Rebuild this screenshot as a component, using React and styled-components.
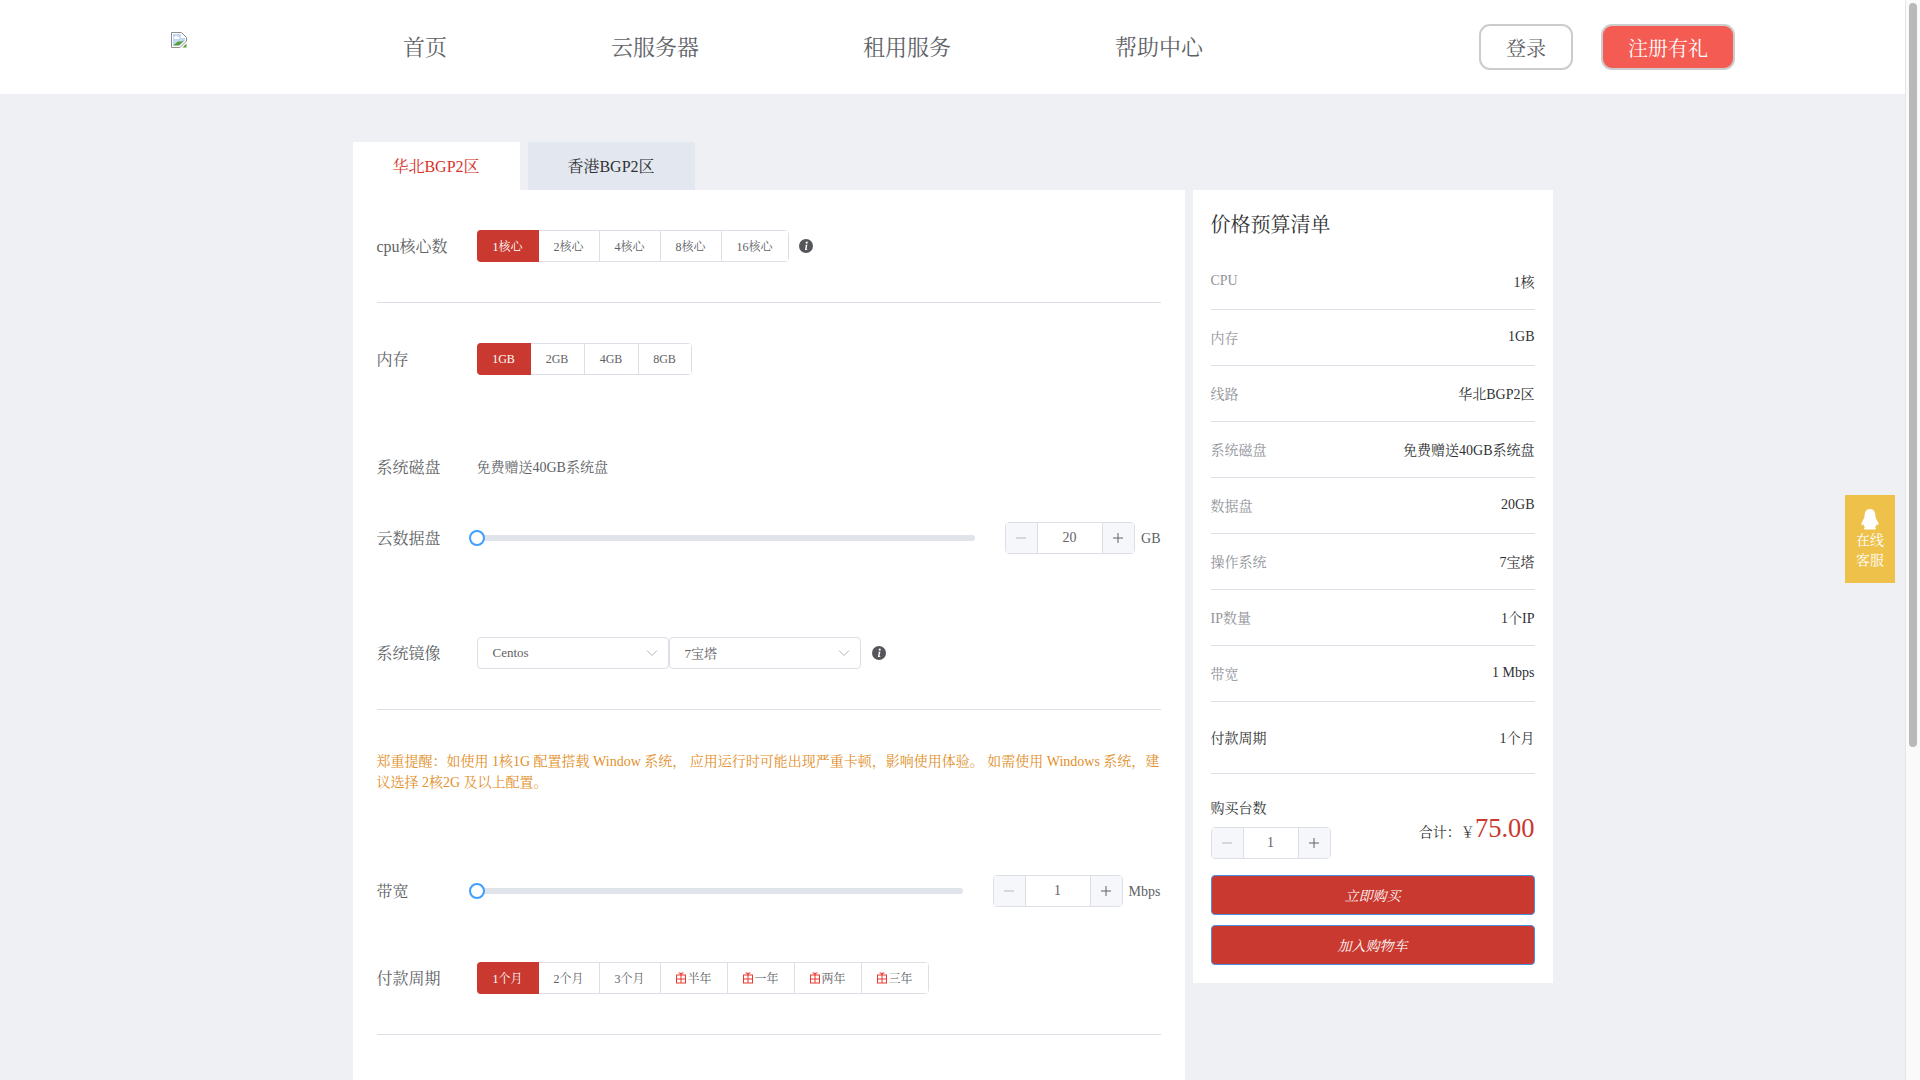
import React from "react";
import styled, { createGlobalStyle } from "styled-components";

const FONT = `"Liberation Serif", "Noto Serif CJK SC", "Noto Sans CJK SC", serif`;

const Global = createGlobalStyle`
  html { overflow-x: hidden; }
  html::-webkit-scrollbar { display: none; }
  body { margin: 0; background: #eef0f4; font-family: ${FONT}; color: #303133; }
  * { box-sizing: border-box; }
`;

const Shell = styled.div`
  width: 1905px;
`;
const Header = styled.header`
  height: 94px;
  background: #fff;
  display: flex;
  align-items: center;
  padding-left: 171px;
`;
const LogoSlot = styled.div`
  width: 232px;
  height: 94px;
  padding-top: 32px;
`;
const Nav = styled.nav`
  display: flex;
  gap: 164px;
  width: 1076px;
  margin-top: -3px;
  font-size: 22px;
  color: #606266;
`;
const NavItem = styled.a`
  white-space: nowrap;
`;
const AuthBtn = styled.button`
  height: 46px;
  width: ${(p) => p.$w}px;
  margin-left: ${(p) => p.$ml}px;
  border: 2px solid #ccc;
  border-radius: 11px;
  font: 20px ${FONT};
  color: ${(p) => (p.$primary ? "#fff" : "#606266")};
  background: ${(p) => (p.$primary ? "#f45b52" : "#fff")};
`;

const Page = styled.main`
  width: 1200px;
  margin: 48px auto 0;
`;
const Tabs = styled.div`
  display: flex;
  gap: 8px;
`;
const Tab = styled.div`
  width: 167px;
  height: 48px;
  padding-bottom: 2px;
  display: flex;
  align-items: center;
  justify-content: center;
  font-size: 16px;
  background: ${(p) => (p.$active ? "#fff" : "#e3e8f0")};
  color: ${(p) => (p.$active ? "#d8322b" : "#303133")};
`;
const Columns = styled.div`
  display: flex;
  gap: 8px;
  align-items: flex-start;
`;
const Config = styled.section`
  width: 832px;
  height: 1370px;
  background: #fff;
  padding: 40px 24px 0;
`;
const Row = styled.div`
  display: flex;
  align-items: center;
  height: 32px;
  margin-top: ${(p) => p.$mt || 0}px;
`;
const Label = styled.div`
  width: 100px;
  flex: none;
  margin-top: -2px;
  font-size: 16px;
  color: #606266;
`;
const Segments = styled.div`
  display: flex;
  height: 32px;
  border: 1px solid #dcdfe6;
  border-radius: 4px;
`;
const Segment = styled.div`
  width: ${(p) => p.$w}px;
  display: flex;
  align-items: center;
  justify-content: center;
  margin: ${(p) => (p.$active ? "-1px 0 -1px -1px" : "0")};
  border-right: ${(p) => (p.$active || p.$last ? "none" : "1px solid #dcdfe6")};
  border-radius: ${(p) => (p.$active ? "4px 0 0 4px" : "0")};
  background: ${(p) => (p.$active ? "#c9392f" : "#fff")};
  color: ${(p) => (p.$active ? "#fff" : "#606266")};
  font-size: 12px;
  white-space: nowrap;
`;
const Info = styled.svg`
  width: 14px;
  height: 14px;
  margin-left: ${(p) => p.$ml}px;
  flex: none;
`;
const Divider = styled.hr`
  border: 0;
  height: 1px;
  margin: ${(p) => p.$mt}px 0 0;
  background: #dcdfe6;
`;
const Plain = styled.div`
  margin-top: -2px;
  font-size: 14px;
  color: #606266;
`;
const Slider = styled.div`
  position: relative;
  width: ${(p) => p.$w}px;
  height: 6px;
  border-radius: 3px;
  background: #e0e3ea;
`;
const Thumb = styled.span`
  position: absolute;
  left: -8px;
  top: -5px;
  width: 16px;
  height: 16px;
  border-radius: 50%;
  background: #fff;
  border: 2px solid #409eff;
`;
const Stepper = styled.div`
  display: flex;
  width: ${(p) => p.$w || 130}px;
  height: 32px;
  border: 1px solid #dcdfe6;
  border-radius: 4px;
  margin-left: ${(p) => p.$ml || 0}px;
  font-size: 14px;
  color: #606266;
`;
const StepBtn = styled.div`
  width: 32px;
  flex: none;
  display: flex;
  align-items: center;
  justify-content: center;
  background: #f5f7fa;
  border-${(p) => (p.$side === "l" ? "right" : "left")}: 1px solid #dcdfe6;
  color: ${(p) => (p.$muted ? "#b4b7bd" : "#606266")};
`;
const StepValue = styled.div`
  flex: 1;
  text-align: center;
  line-height: 30px;
`;
const Unit = styled.div`
  font-size: 14px;
  color: #606266;
  margin-left: auto;
  margin-top: 1px;
`;
const Select = styled.div`
  width: 192px;
  height: 32px;
  padding: 0 9px 0 15px;
  display: flex;
  align-items: center;
  justify-content: space-between;
  border: 1px solid #dcdfe6;
  border-radius: 4px;
  font-size: 13px;
  color: #606266;
`;
const SelectText = styled.span`
  margin-top: -1px;
`;
const Notice = styled.p`
  margin: ${(p) => p.$mt}px 0 0;
  font-size: 14px;
  line-height: 21px;
  color: #e28f2a;
`;
const Gift = styled.svg`
  width: 12px;
  height: 12px;
  flex: none;
`;

const Summary = styled.aside`
  width: 360px;
  height: 793px;
  background: #fff;
  padding: 18px 18px 0;
`;
const SumTitle = styled.h3`
  margin: 0;
  height: 46px;
  padding-top: 2px;
  font-size: 20px;
  line-height: 30px;
  font-weight: 400;
  color: #303133;
`;
const SumRow = styled.div`
  height: ${(p) => p.$h || 56}px;
  padding-bottom: 2px;
  display: flex;
  align-items: center;
  justify-content: space-between;
  border-bottom: 1px solid #dcdfe6;
  font-size: 14px;
  color: #303133;
`;
const SumKey = styled.span`
  color: ${(p) => (p.$strong ? "#303133" : "#909399")};
`;
const QtyRow = styled.div`
  display: flex;
  justify-content: space-between;
  margin-top: 25px;
  height: 60px;
`;
const QtyLabel = styled.div`
  font-size: 14px;
  line-height: 20px;
  margin-bottom: 8px;
`;
const Total = styled.div`
  display: flex;
  align-items: baseline;
  font-size: 14px;
  padding-top: 14px;
`;
const Amount = styled.span`
  font-size: 26.5px;
  color: #c9392f;
`;
const BuyBtn = styled.button`
  display: block;
  width: 100%;
  height: 40px;
  margin-top: ${(p) => p.$mt}px;
  background: #c9392f;
  border: 1px solid #4a90e2;
  border-radius: 4px;
  color: #fff;
  font: italic 14px ${FONT};
`;
const QQ = styled.div`
  position: fixed;
  left: 1845px;
  top: 495px;
  width: 50px;
  height: 88px;
  background: #eec14a;
  color: #fff;
  font-size: 14px;
  line-height: 20px;
  text-align: center;
  padding-top: 14px;
`;
const PenguinSvg = styled.svg`
  display: block;
  margin: 0 auto;
`;
const ScrollTrack = styled.div`
  position: fixed;
  top: 0;
  right: 0;
  bottom: 0;
  width: 15px;
  background: #fafafa;
  border-left: 1px solid #e6e6e6;
  padding: 3px 3px 0 3px;
`;
const ScrollThumb = styled.div`
  height: 744px;
  background: #b9b9b9;
  border-radius: 4px;
`;

const BrokenImage = () => (
  <svg width="16" height="16" viewBox="0 0 16 16">
    <path d="M0.5 0.5H10.5L15.5 5.5V9L12 12.5L9 15.5H0.5Z" fill="#fff" stroke="#8f8f8f" />
    <path d="M2 2H10V6H14V8.5L9 13.5H2Z" fill="#c3d8f5" />
    <path d="M2 13.5L7 9.5L10 9.5L13 8.5L8 13.5Z" fill="#5a9e3a" />
    <path d="M13 14L15.5 11.5V15.5H11.5Z" fill="#5a9e3a" />
    <path d="M4 5a1.2 1.2 0 0 1 2.4 0h1a1 1 0 0 1 0 2H3.5a1 1 0 0 1 .5-2z" fill="#fff" />
  </svg>
);
const InfoIcon = ({ ml }) => (
  <Info $ml={ml} viewBox="0 0 14 14">
    <circle cx="7" cy="7" r="7" fill="#55565a" />
    <circle cx="7.7" cy="3.7" r="1.1" fill="#fff" />
    <path d="M7 5.8h1.4L7.5 10.2h.9l-.2.8H5.9l.9-4.4H6z" fill="#fff" />
  </Info>
);
const GiftIcon = () => (
  <Gift viewBox="0 0 12 12" fill="none" stroke="#e8382f" strokeWidth="1">
    <rect x="1.5" y="3" width="9" height="8" />
    <path d="M1.5 7h9M6 3v8M3.5 1h2l.5 2M8.5 1h-2l-.5 2" />
  </Gift>
);
const Chevron = () => (
  <svg width="14" height="14" viewBox="0 0 14 14" fill="none" stroke="#b4b7bd" strokeWidth="1">
    <path d="M2 4.5L7 9.5L12 4.5" />
  </svg>
);
const Penguin = () => (
  <PenguinSvg width="20" height="22" viewBox="0 0 20 22" fill="#fff">
    <path d="M10 0C5.8 0 4.6 3.5 4.6 7C4.6 9 2.3 12 1.5 14.500C1 16.500 2.300 16.500 3.400 15.300C3.700 17 4.500 17.800 5 18.500C3.600 19 3.500 20.500 6 20.500H14C16.500 20.500 16.400 19 15 18.500C15.500 17.800 16.300 17 16.600 15.300C17.700 16.500 19 16.500 18.500 14.500C17.700 12 15.400 9 15.400 7C15.400 3.500 14.200 0 10 0Z" />
  </PenguinSvg>
);

const Minus = () => (
  <svg width="12" height="12" viewBox="0 0 12 12" stroke="currentColor"><path d="M1 6h10" /></svg>
);
const Plus = () => (
  <svg width="12" height="12" viewBox="0 0 12 12" stroke="currentColor"><path d="M1 6h10M6 1v10" /></svg>
);
const NumberStepper = ({ value, w, ml }) => (
  <Stepper $w={w} $ml={ml}>
    <StepBtn $side="l" $muted><Minus /></StepBtn>
    <StepValue>{value}</StepValue>
    <StepBtn $side="r"><Plus /></StepBtn>
  </Stepper>
);

const cpu = [["1核心", 62], ["2核心", 61], ["4核心", 61], ["8核心", 61], ["16核心", 66]];
const mem = [["1GB", 54], ["2GB", 54], ["4GB", 54], ["8GB", 52]];
const period = [["1个月", 62], ["2个月", 61], ["3个月", 61], ["半年", 67, 1], ["一年", 67, 1], ["两年", 67, 1], ["三年", 66, 1]];
const rows = [
  ["CPU", "1核"], ["内存", "1GB"], ["线路", "华北BGP2区"], ["系统磁盘", "免费赠送40GB系统盘"],
  ["数据盘", "20GB"], ["操作系统", "7宝塔"], ["IP数量", "1个IP"], ["带宽", "1 Mbps"],
];

const Segs = ({ items }) => (
  <Segments>
    {items.map(([t, w, g], i) => (
      <Segment key={t} $w={w} $active={i === 0} $last={i === items.length - 1}>
        {g ? <GiftIcon /> : null}{t}
      </Segment>
    ))}
  </Segments>
);

export default function App() {
  return (
    <Shell>
      <Global />
      <Header>
        <LogoSlot><BrokenImage /></LogoSlot>
        <Nav>
          <NavItem>首页</NavItem>
          <NavItem>云服务器</NavItem>
          <NavItem>租用服务</NavItem>
          <NavItem>帮助中心</NavItem>
        </Nav>
        <AuthBtn $w={94} $ml={0}>登录</AuthBtn>
        <AuthBtn $w={134} $ml={28} $primary>注册有礼</AuthBtn>
      </Header>
      <Page>
        <Tabs>
          <Tab $active>华北BGP2区</Tab>
          <Tab>香港BGP2区</Tab>
        </Tabs>
        <Columns>
          <Config>
            <Row>
              <Label>cpu核心数</Label>
              <Segs items={cpu} />
              <InfoIcon ml={10} />
            </Row>
            <Divider $mt={40} />
            <Row $mt={40}>
              <Label>内存</Label>
              <Segs items={mem} />
            </Row>
            <Row $mt={76}>
              <Label>系统磁盘</Label>
              <Plain>免费赠送40GB系统盘</Plain>
            </Row>
            <Row $mt={39}>
              <Label>云数据盘</Label>
              <Slider $w={498}><Thumb /></Slider>
              <NumberStepper value="20" ml={30} />
              <Unit>GB</Unit>
            </Row>
            <Row $mt={83}>
              <Label>系统镜像</Label>
              <Select><SelectText>Centos</SelectText><Chevron /></Select>
              <Select><SelectText>7宝塔</SelectText><Chevron /></Select>
              <InfoIcon ml={11} />
            </Row>
            <Divider $mt={40} />
            <Notice $mt={41}>
              郑重提醒：如使用 1核1G 配置搭载 Window 系统， 应用运行时可能出现严重卡顿，影响使用体验。 如需使用 Windows 系统，建议选择 2核2G 及以上配置。
            </Notice>
            <Row $mt={82}>
              <Label>带宽</Label>
              <Slider $w={486}><Thumb /></Slider>
              <NumberStepper value="1" ml={30} />
              <Unit>Mbps</Unit>
            </Row>
            <Row $mt={55}>
              <Label>付款周期</Label>
              <Segs items={period} />
            </Row>
            <Divider $mt={40} />
            <Notice $mt={43}>温馨提示：半年享九折，一年享八折，两年享七折，三年享六折</Notice>
          </Config>
          <Summary>
            <SumTitle>价格预算清单</SumTitle>
            {rows.map(([k, v]) => (
              <SumRow key={k}><SumKey>{k}</SumKey><span>{v}</span></SumRow>
            ))}
            <SumRow $h={72}><SumKey $strong>付款周期</SumKey><span>1个月</span></SumRow>
            <QtyRow>
              <div>
                <QtyLabel>购买台数</QtyLabel>
                <NumberStepper value="1" w={120} />
              </div>
              <Total>合计：￥<Amount>75.00</Amount></Total>
            </QtyRow>
            <BuyBtn $mt={16}>立即购买</BuyBtn>
            <BuyBtn $mt={10}>加入购物车</BuyBtn>
          </Summary>
        </Columns>
      </Page>
      <QQ>
        <Penguin />
        <div>在线</div>
        <div>客服</div>
      </QQ>
      <ScrollTrack><ScrollThumb /></ScrollTrack>
    </Shell>
  );
}
